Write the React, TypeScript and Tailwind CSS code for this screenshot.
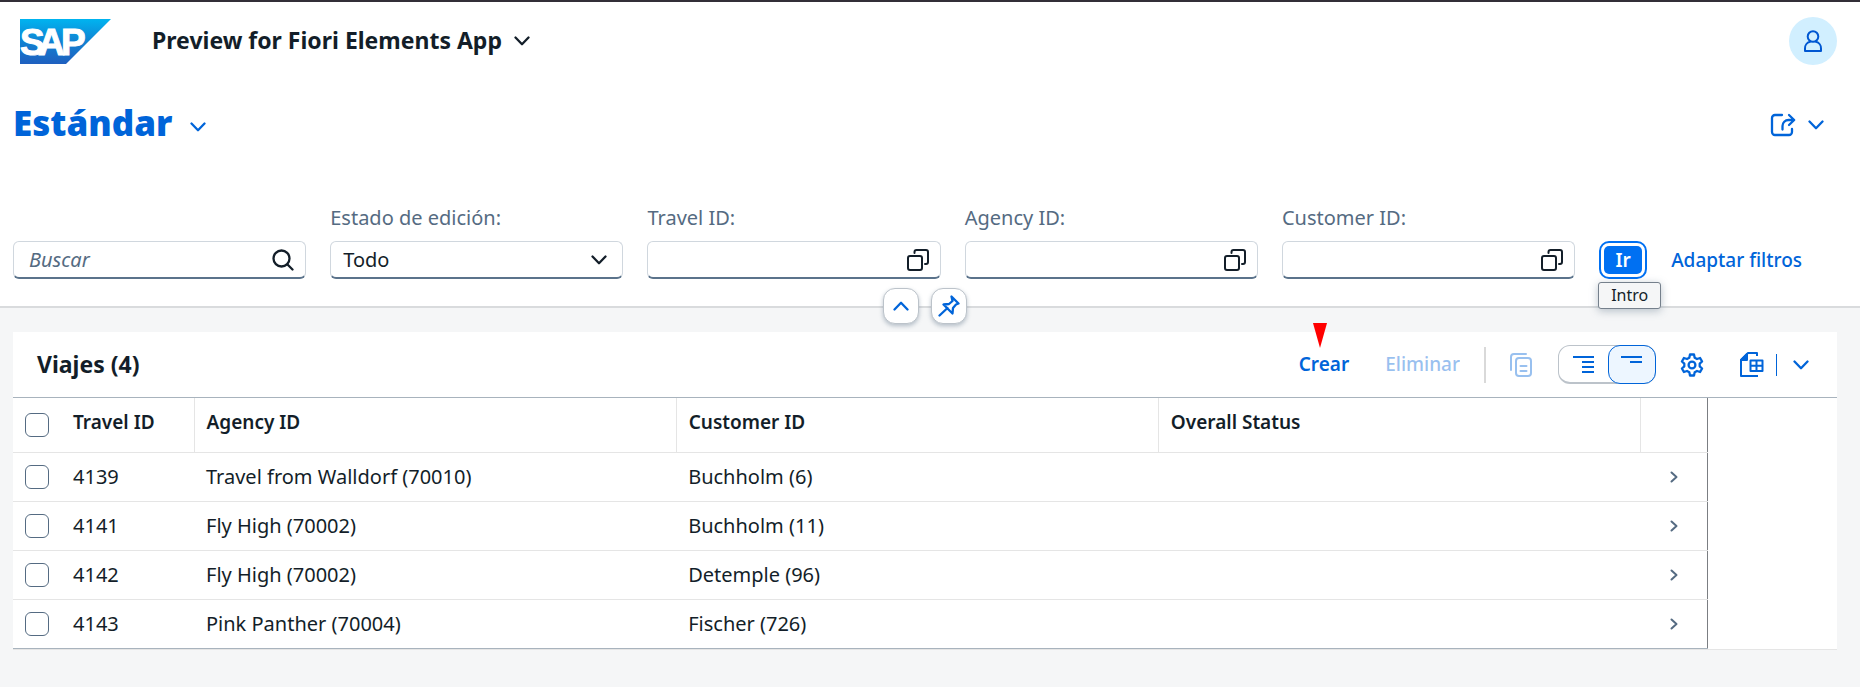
import React from "react";

type IconProps = { className?: string };

const stroke = {
  fill: "none",
  stroke: "currentColor",
  strokeWidth: 2.3,
  strokeLinecap: "round" as const,
  strokeLinejoin: "round" as const,
  "aria-hidden": true,
};

function Chevron({ className = "" }: IconProps) {
  return (
    <svg {...stroke} viewBox="0 0 16 10" className={`h-[10px] w-4 ${className}`}>
      <path d="M1.500 1.500 8 8.200l6.500-6.700" />
    </svg>
  );
}

function SapLogo() {
  return (
    <svg viewBox="0 0 91 45" className="h-[45px] w-[91px]" role="img" aria-label="SAP">
      <defs>
        <linearGradient id="sap" x1="0" y1="0" x2="0" y2="1">
          <stop offset="0" stopColor="#00b4f0" />
          <stop offset="0.5" stopColor="#1182d2" />
          <stop offset="1" stopColor="#1f5fbf" />
        </linearGradient>
      </defs>
      <path fill="url(#sap)" d="M0 0h91L46 45H0z" />
      <text x="0 18 41" y="36" fontFamily="Liberation Sans, sans-serif" fontWeight="700" fontSize="37" fill="#fff" stroke="#fff" strokeWidth="1">
        SAP
      </text>
    </svg>
  );
}

function PersonIcon() {
  return (
    <svg {...stroke} strokeWidth={2} viewBox="0 0 20 24" className="h-6 w-5">
      <circle cx="10" cy="7.500" r="5.300" />
      <path d="M2 22v-2.500a6.500 6.500 0 0 1 5-6.700M18 22v-2.500a6.500 6.500 0 0 0-5-6.700M2 22h16" />
    </svg>
  );
}

function ShareIcon() {
  return (
    <svg {...stroke} viewBox="0 0 26 24" className="h-6 w-[26px]">
      <path d="M12 2H5a3 3 0 0 0-3 3v14a3 3 0 0 0 3 3h14a3 3 0 0 0 3-3v-3" />
      <path d="M12.500 16.500V13a6 6 0 0 1 6-6H24M19 2l5.200 5-5.200 5" />
    </svg>
  );
}

function SearchIcon() {
  return (
    <svg {...stroke} viewBox="0 0 22 22" className="h-[22px] w-[22px] text-[#131e29]">
      <circle cx="9.500" cy="9.500" r="8" />
      <path d="m15.500 15.500 5 5" />
    </svg>
  );
}

function ValueHelpIcon() {
  return (
    <svg {...stroke} strokeWidth={2} viewBox="0 0 22 22" className="h-[22px] w-[22px] text-[#131e29]">
      <rect x="1" y="7" width="14" height="14" rx="2" />
      <path d="M7.500 4V3a2 2 0 0 1 2-2H19a2 2 0 0 1 2 2v10a2 2 0 0 1-2 2h-1" />
    </svg>
  );
}

function PinIcon() {
  return (
    <svg {...stroke} viewBox="0 0 22 22" className="h-[22px] w-[22px]">
      <path d="m13.500 1.500 7 7-2.500 1-3 3.500-.5 5.500-9-9 5.500-.5 3.500-3zM9.500 13 1.500 20.500" />
    </svg>
  );
}

function CopyIcon() {
  return (
    <svg {...stroke} strokeWidth={2} viewBox="0 0 22 24" className="h-6 w-[22px]">
      <path d="M1 17V4a3 3 0 0 1 3-3h12" />
      <rect x="6" y="5" width="15" height="18" rx="3" />
      <path d="M10.500 13h6M10.500 18h6" />
    </svg>
  );
}

function ExpandTreeIcon() {
  return (
    <svg {...stroke} strokeWidth={2} strokeLinecap="butt" viewBox="0 0 22 18" className="h-[18px] w-[22px]">
      <path d="M0 2h21M9 7h12M9 12h12M9 17h12" />
    </svg>
  );
}

function CollapseTreeIcon() {
  return (
    <svg {...stroke} strokeWidth={2} strokeLinecap="butt" viewBox="0 0 22 18" className="h-[18px] w-[22px]">
      <path d="M0 1h21M9 6h12" />
    </svg>
  );
}

function GearIcon() {
  return (
    <svg {...stroke} viewBox="0 0 24 24" className="h-6 w-6">
      <path d="M10 1.500h4l.7 3.200 2.300 1.300 3.100-1 2 3.500-2.400 2.200v2.600l2.400 2.200-2 3.500-3.100-1-2.300 1.300-.7 3.200h-4l-.7-3.200L7 18l-3.100 1-2-3.500 2.400-2.200v-2.600L1.900 8.500l2-3.500L7 6l2.300-1.300z" />
      <circle cx="12" cy="12" r="3.400" />
    </svg>
  );
}

function ExportIcon() {
  return (
    <svg {...stroke} strokeWidth={2} strokeLinecap="butt" viewBox="0 0 24 25" className="h-[25px] w-6">
      <path d="M18 24H1V8l7-7h9v3" />
      <path d="M1 8h6V2z" fill="currentColor" />
      <path d="M10.500 8.500H22.500V19H10.500zM16.500 8.500V19M10.500 13.800h12" />
    </svg>
  );
}

const fieldBox =
  "flex h-[38px] items-center rounded-[6px] border border-[#d0d7de] border-b-2 border-b-[#5b738b] bg-white pr-[11px]";

const fieldLabel = "block h-[38px] text-[20px] leading-[30px] text-[#556b82]";

const roundButton =
  "flex h-9 w-9 items-center justify-center rounded-[12px] border border-[#bcc3ca] bg-white shadow-[0_2px_4px_rgba(85,107,130,0.4)]";

function ValueHelpField({ id, label }: { id: string; label: string }) {
  return (
    <div className="min-w-0 flex-1">
      <label htmlFor={id} className={fieldLabel}>
        {label}
      </label>
      <div className={fieldBox}>
        <input id={id} className="h-full min-w-0 flex-1 bg-transparent px-3 text-[20px] outline-none" />
        <button type="button" aria-label={`Ayuda ${label}`}>
          <ValueHelpIcon />
        </button>
      </div>
    </div>
  );
}

const rows = [
  { id: "4139", agency: "Travel from Walldorf (70010)", customer: "Buchholm (6)" },
  { id: "4141", agency: "Fly High (70002)", customer: "Buchholm (11)" },
  { id: "4142", agency: "Fly High (70002)", customer: "Detemple (96)" },
  { id: "4143", agency: "Pink Panther (70004)", customer: "Fischer (726)" },
];

function Checkbox({ label }: { label: string }) {
  return (
    <input
      type="checkbox"
      aria-label={label}
      className="block h-6 w-6 appearance-none rounded-[6px] border border-[#556b82] bg-white checked:bg-[#0070f2]"
    />
  );
}

export default function App() {
  return (
    <div className="min-h-screen bg-[#f5f6f7] font-['Noto_Sans',sans-serif] text-[20px] leading-[30px] text-[#131e29]">
      <header className="flex h-20 items-center border-t-2 border-[#332f38] bg-white pr-[23px] pl-5">
        <SapLogo />
        <button type="button" className="ml-[41px] flex items-center gap-3 pb-[2px] text-[23px] font-bold">
          Preview for Fiori Elements App
          <Chevron className="mt-[2px]" />
        </button>
        <button type="button" aria-label="Perfil" className="ml-auto flex h-12 w-12 items-center justify-center rounded-full bg-[#d1efff] text-[#0057d2]">
          <PersonIcon />
        </button>
      </header>

      <section className="relative border-b-2 border-[#d9dbdd] bg-white">
        <div className="flex h-[90px] items-center pr-9 pl-[13px] text-[#0064d9]">
          <h1>
            <button type="button" className="flex items-center gap-[18px] pb-1 text-[35px] font-black">
              Estándar
              <Chevron className="mt-2" />
            </button>
          </h1>
          <div className="ml-auto flex items-center gap-3">
            <button type="button" aria-label="Compartir">
              <ShareIcon />
            </button>
            <button type="button" aria-label="Más opciones">
              <Chevron />
            </button>
          </div>
        </div>
        <div className="flex items-end gap-6 pt-[33px] pr-[58px] pb-[27px] pl-[13px]">
          <div className="min-w-0 flex-1">
            <div className={fieldBox}>
              <input type="search" aria-label="Buscar" placeholder="Buscar" className="h-full min-w-0 flex-1 bg-transparent px-[15px] text-[20px] italic outline-none placeholder:text-[#556b82]" />
              <button type="button" aria-label="Ejecutar búsqueda">
                <SearchIcon />
              </button>
            </div>
          </div>
          <div className="min-w-0 flex-1">
            <label htmlFor="estado" className={fieldLabel}>
              Estado de edición:
            </label>
            <div className={`${fieldBox} relative`}>
              <select id="estado" className="h-full w-full appearance-none bg-transparent px-3 text-[20px] outline-none">
                <option>Todo</option>
              </select>
              <Chevron className="pointer-events-none absolute right-[15px]" />
            </div>
          </div>
          <ValueHelpField id="travel" label="Travel ID:" />
          <ValueHelpField id="agency" label="Agency ID:" />
          <ValueHelpField id="customer" label="Customer ID:" />
          <div className="relative">
            <button type="button" className="block h-[38px] w-12 rounded-[10px] border-2 border-[#0070f2] p-[3px] text-[19px] font-semibold">
              <span className="flex h-full items-center justify-center rounded-[5px] bg-[#0070f2] text-white">Ir</span>
            </button>
            <div role="tooltip" className="absolute top-[41px] -left-px z-10 rounded-[3px] border border-[#75808c] bg-[#f5f6f7] px-3 text-[16px] leading-[25px] shadow-[0_2px_8px_rgba(85,107,130,0.4)]">
              Intro
            </div>
          </div>
          <button type="button" className="h-[38px] text-[19px] font-medium text-[#0064d9]">
            Adaptar filtros
          </button>
        </div>
        <div className="absolute inset-x-0 -bottom-[18px] flex justify-center gap-3 pr-[10px] text-[#0064d9]">
          <button type="button" aria-label="Contraer cabecera" className={roundButton}>
            <Chevron className="rotate-180" />
          </button>
          <button type="button" aria-label="Fijar cabecera" className={roundButton}>
            <PinIcon />
          </button>
        </div>
      </section>

      <main className="mt-6 mr-[23px] ml-[13px] border-b border-[#e5e5e5] bg-white">
        <div className="flex h-[66px] items-center border-b border-[#a8b3bd] pr-7 pl-6 text-[#0064d9]">
          <h2 className="pb-[2px] text-[23px] font-bold text-[#131e29]">Viajes (4)</h2>
          <div className="relative ml-auto">
            <button type="button" className="block pb-[2px] text-[19px] font-semibold">
              Crear
            </button>
            <svg viewBox="0 0 14 25" className="absolute -top-[26px] left-[14px] h-[25px] w-[14px]" aria-hidden="true">
              <path fill="#f00" d="M0 0h14L7 25z" />
            </svg>
          </div>
          <button type="button" disabled className="ml-9 pb-[2px] text-[19px] font-medium opacity-40">
            Eliminar
          </button>
          <span className="ml-6 h-9 w-[2px] bg-[#d9d9d9]" />
          <button type="button" disabled aria-label="Copiar" className="ml-6 opacity-40">
            <CopyIcon />
          </button>
          <div className="ml-[26px] flex h-[39px] rounded-[12px] border border-b-2 border-[#bcc3ca]">
            <button type="button" aria-label="Expandir" className="flex w-[50px] items-center justify-center">
              <ExpandTreeIcon />
            </button>
            <button type="button" aria-label="Contraer" aria-pressed="true" className="-mx-px -mt-px -mb-[2px] flex w-12 items-center justify-center rounded-[12px] border border-[#0064d9] bg-[#edf6ff]">
              <CollapseTreeIcon />
            </button>
          </div>
          <button type="button" aria-label="Configuración" className="ml-6">
            <GearIcon />
          </button>
          <button type="button" aria-label="Exportar" className="ml-9">
            <ExportIcon />
          </button>
          <span className="ml-3 h-[22px] w-px bg-[#0064d9]" />
          <button type="button" aria-label="Opciones de exportación" className="ml-4">
            <Chevron />
          </button>
        </div>
        <div className="pr-[129px]">
          <table className="w-full table-fixed border-collapse border-r border-b border-r-[#7b7e82] border-b-[#a8b3bd] text-left">
            <colgroup>
              <col className="w-12" />
              <col className="w-[133px]" />
              <col />
              <col />
              <col />
              <col className="w-[67px]" />
            </colgroup>
            <thead className="text-[19px]">
              <tr className="h-[54px] border-b border-[#e5e5e5]">
                <th className="pl-3">
                  <Checkbox label="Seleccionar todo" />
                </th>
                <th className="border-r border-[#e5e5e5] pb-[6px] pl-3 font-semibold">Travel ID</th>
                <th className="border-r border-[#e5e5e5] pb-[6px] pl-3 font-semibold">Agency ID</th>
                <th className="border-r border-[#e5e5e5] pb-[6px] pl-3 font-semibold">Customer ID</th>
                <th className="border-r border-[#e5e5e5] pb-[6px] pl-3 font-semibold">Overall Status</th>
                <th />
              </tr>
            </thead>
            <tbody>
              {rows.map((row) => (
                <tr key={row.id} className="h-[49px] border-b border-[#e5e5e5] last:border-b-0">
                  <td className="pl-3">
                    <Checkbox label={`Seleccionar ${row.id}`} />
                  </td>
                  <td className="pl-3">{row.id}</td>
                  <td className="pl-3">{row.agency}</td>
                  <td className="pl-3">{row.customer}</td>
                  <td />
                  <td>
                    <svg {...stroke} strokeWidth={2} viewBox="0 0 8 12" className="ml-[29px] h-3 w-2 text-[#556b82]">
                      <path d="m1.500 1.500 5 4.500-5 4.500" />
                    </svg>
                  </td>
                </tr>
              ))}
            </tbody>
          </table>
        </div>
      </main>
    </div>
  );
}
